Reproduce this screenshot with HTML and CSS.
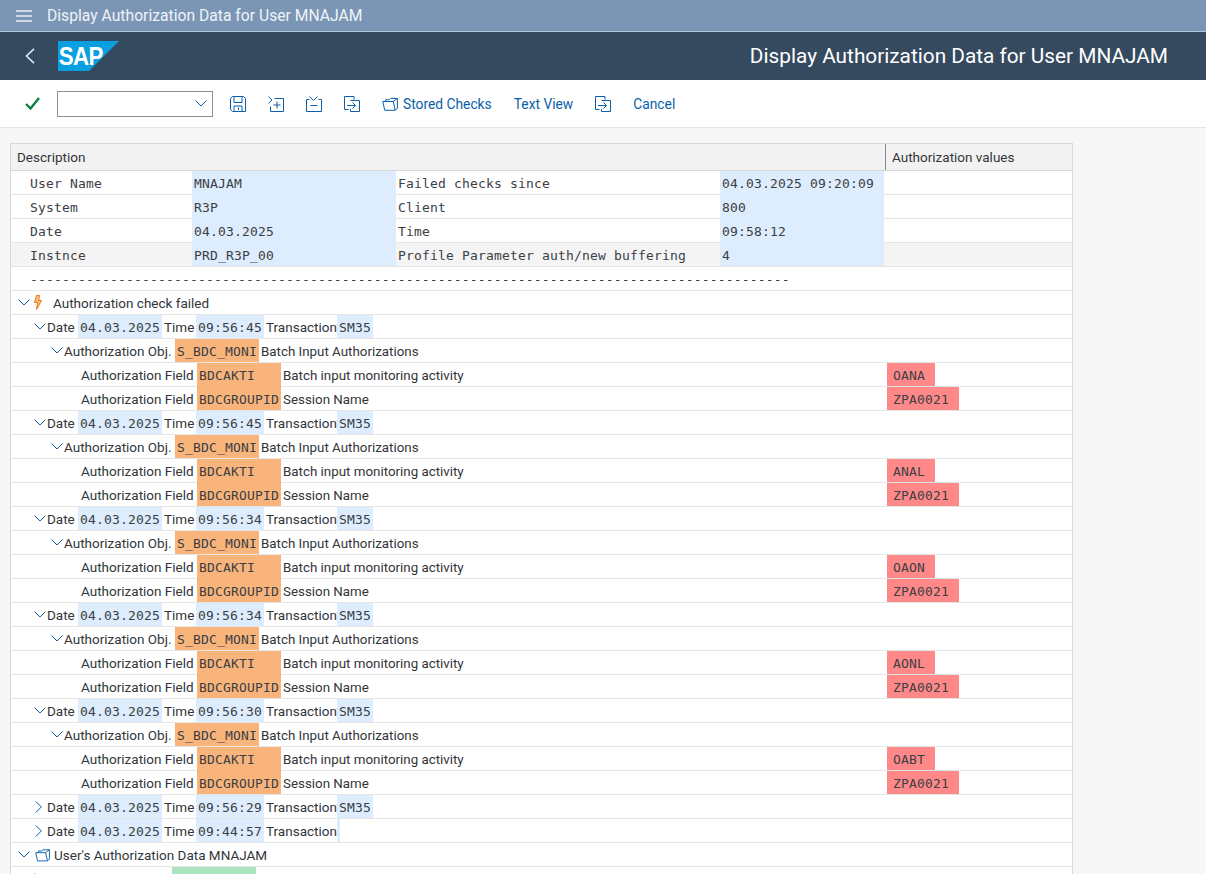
FILE: index.html
```html
<!DOCTYPE html>
<html lang="en">
<head>
  <meta charset="UTF-8">
  <title>Display Authorization Data for User MNAJAM</title>
  <link rel="stylesheet" href="styles.css">
</head>
<body>
  <svg class="defs" width="0" height="0">
    <symbol id="down" viewBox="0 0 12 7"><path d="M.5.5 6 6l5.5-5.5"/></symbol>
    <symbol id="right" viewBox="0 0 7 12"><path d="M.8.5 6.3 6 .8 11.5"/></symbol>
    <symbol id="folder" viewBox="0 0 16 14"><path d="M.7 4.5h10.6l2 8.8H2.8zM3.7 4.5V2.7h3.6L8.6 1.4h6.8v9.8l-2 2M11.3 4.5l4-3.100"/></symbol>
    <symbol id="transfer" viewBox="0 0 16 16"><path d="M4.500 13.500H.5V.5h9.500v3M6.500 4.500h9v11h-9V13M3 9.500h8M8.500 6.500l3 3-3 3"/></symbol>
  </svg>

  <header class="shell-top">
    <svg class="menu" width="16" height="12" viewBox="0 0 16 12"><path d="M0 1h16M0 6h16M0 11h16"/></svg>
    <span>Display Authorization Data for User MNAJAM</span>
  </header>

  <header class="shell-title">
    <svg class="back" width="10" height="16" viewBox="0 0 10 16"><path d="M9 .8 1.500 8 9 15.200"/></svg>
    <svg class="logo" width="61" height="30" viewBox="0 0 61 30">
      <polygon points="0,0 61,0 31,30 0,30" fill="#0a9fe0"/>
      <text x="1" y="24.500" transform="scale(.86 1)">SAP</text>
    </svg>
    <h1>Display Authorization Data for User MNAJAM</h1>
  </header>

  <nav class="toolbar">
    <svg class="check" width="15" height="13" viewBox="0 0 15 13"><path d="M1 7l4.500 4.500L14 1"/></svg>
    <div class="select">
      <svg class="ico chev" width="12" height="7"><use href="#down"/></svg>
    </div>
    <div class="tools">
      <svg class="ico" width="16" height="16" viewBox="0 0 16 16"><path d="M2.500.5h11l2 2v13H2.500l-2-2v-11zM4 .5v6h8v-6M4 15.500V10h8v5.500M8.500 11.500v2.500"/></svg>
      <svg class="ico" width="16" height="16" viewBox="0 0 16 16"><path d="M6.500 2.500h9v13H2.500v-5M.5 .5l3.500 3.500-3.500 3.500M5.500 9h7M9 5.500v7"/></svg>
      <svg class="ico" width="16" height="16" viewBox="0 0 16 16"><path d="M.5 3.500v12h15v-12h-3M3.500 3.500h-3M3.500 .5l4 4 4-4M4.500 9.500h7"/></svg>
      <svg class="ico" width="16" height="16"><use href="#transfer"/></svg>
      <span class="tool"><svg class="ico" width="16" height="14"><use href="#folder"/></svg><span>Stored Checks</span></span>
      <span class="tool"><span>Text View</span></span>
      <svg class="ico" width="16" height="16"><use href="#transfer"/></svg>
      <span class="tool"><span>Cancel</span></span>
    </div>
  </nav>

  <main class="content">
    <section class="tree">
      <div class="head"><div class="desc">Description</div><div>Authorization values</div></div>

      <div class="info join"><span class="m">User Name</span><span class="m b">MNAJAM</span><span class="m">Failed checks since</span><span class="m b">04.03.2025 09:20:09</span></div>
      <div class="info join"><span class="m">System</span><span class="m b">R3P</span><span class="m">Client</span><span class="m b">800</span></div>
      <div class="info join"><span class="m">Date</span><span class="m b">04.03.2025</span><span class="m">Time</span><span class="m b">09:58:12</span></div>
      <div class="info grey"><span class="m">Instnce</span><span class="m b">PRD_R3P_00</span><span class="m">Profile Parameter auth/new buffering</span><span class="m b">4</span></div>
      <div class="row dashes"><span class="m">-----------------------------------------------------------------------------------------------</span></div>

      <div class="row l0"><svg class="ico tw" width="12" height="7"><use href="#down"/></svg><svg class="bolt" width="10" height="15" viewBox="0 0 10 15"><path d="M6.500.5H3.500L1.500 7.500H4.800L3.500 14.500 8.500 5.500H5.500z"/></svg><span class="t0">Authorization check failed</span></div>

      <div class="row l1"><svg class="ico tw" width="12" height="7"><use href="#down"/></svg><span class="ld">Date</span><span class="m b w10">04.03.2025</span><span class="lt">Time</span><span class="m b w8">09:56:45</span><span class="lx">Transaction</span><span class="m b w4">SM35</span></div>
      <div class="row l2"><svg class="ico tw" width="12" height="7"><use href="#down"/></svg><span class="lo">Authorization Obj.</span><span class="m o w10">S_BDC_MONI</span><span class="tx">Batch Input Authorizations</span></div>
      <div class="row l3 join"><span class="lf">Authorization Field</span><span class="m o w10">BDCAKTI</span><span class="tx">Batch input monitoring activity</span><span class="m r">OANA</span></div>
      <div class="row l3"><span class="lf">Authorization Field</span><span class="m o w10">BDCGROUPID</span><span class="tx">Session Name</span><span class="m r">ZPA0021</span></div>

      <div class="row l1"><svg class="ico tw" width="12" height="7"><use href="#down"/></svg><span class="ld">Date</span><span class="m b w10">04.03.2025</span><span class="lt">Time</span><span class="m b w8">09:56:45</span><span class="lx">Transaction</span><span class="m b w4">SM35</span></div>
      <div class="row l2"><svg class="ico tw" width="12" height="7"><use href="#down"/></svg><span class="lo">Authorization Obj.</span><span class="m o w10">S_BDC_MONI</span><span class="tx">Batch Input Authorizations</span></div>
      <div class="row l3 join"><span class="lf">Authorization Field</span><span class="m o w10">BDCAKTI</span><span class="tx">Batch input monitoring activity</span><span class="m r">ANAL</span></div>
      <div class="row l3"><span class="lf">Authorization Field</span><span class="m o w10">BDCGROUPID</span><span class="tx">Session Name</span><span class="m r">ZPA0021</span></div>

      <div class="row l1"><svg class="ico tw" width="12" height="7"><use href="#down"/></svg><span class="ld">Date</span><span class="m b w10">04.03.2025</span><span class="lt">Time</span><span class="m b w8">09:56:34</span><span class="lx">Transaction</span><span class="m b w4">SM35</span></div>
      <div class="row l2"><svg class="ico tw" width="12" height="7"><use href="#down"/></svg><span class="lo">Authorization Obj.</span><span class="m o w10">S_BDC_MONI</span><span class="tx">Batch Input Authorizations</span></div>
      <div class="row l3 join"><span class="lf">Authorization Field</span><span class="m o w10">BDCAKTI</span><span class="tx">Batch input monitoring activity</span><span class="m r">OAON</span></div>
      <div class="row l3"><span class="lf">Authorization Field</span><span class="m o w10">BDCGROUPID</span><span class="tx">Session Name</span><span class="m r">ZPA0021</span></div>

      <div class="row l1"><svg class="ico tw" width="12" height="7"><use href="#down"/></svg><span class="ld">Date</span><span class="m b w10">04.03.2025</span><span class="lt">Time</span><span class="m b w8">09:56:34</span><span class="lx">Transaction</span><span class="m b w4">SM35</span></div>
      <div class="row l2"><svg class="ico tw" width="12" height="7"><use href="#down"/></svg><span class="lo">Authorization Obj.</span><span class="m o w10">S_BDC_MONI</span><span class="tx">Batch Input Authorizations</span></div>
      <div class="row l3 join"><span class="lf">Authorization Field</span><span class="m o w10">BDCAKTI</span><span class="tx">Batch input monitoring activity</span><span class="m r">AONL</span></div>
      <div class="row l3"><span class="lf">Authorization Field</span><span class="m o w10">BDCGROUPID</span><span class="tx">Session Name</span><span class="m r">ZPA0021</span></div>

      <div class="row l1"><svg class="ico tw" width="12" height="7"><use href="#down"/></svg><span class="ld">Date</span><span class="m b w10">04.03.2025</span><span class="lt">Time</span><span class="m b w8">09:56:30</span><span class="lx">Transaction</span><span class="m b w4">SM35</span></div>
      <div class="row l2"><svg class="ico tw" width="12" height="7"><use href="#down"/></svg><span class="lo">Authorization Obj.</span><span class="m o w10">S_BDC_MONI</span><span class="tx">Batch Input Authorizations</span></div>
      <div class="row l3 join"><span class="lf">Authorization Field</span><span class="m o w10">BDCAKTI</span><span class="tx">Batch input monitoring activity</span><span class="m r">OABT</span></div>
      <div class="row l3"><span class="lf">Authorization Field</span><span class="m o w10">BDCGROUPID</span><span class="tx">Session Name</span><span class="m r">ZPA0021</span></div>

      <div class="row l1 closed"><svg class="ico tw" width="7" height="12"><use href="#right"/></svg><span class="ld">Date</span><span class="m b w10">04.03.2025</span><span class="lt">Time</span><span class="m b w8">09:56:29</span><span class="lx">Transaction</span><span class="m b w4">SM35</span></div>
      <div class="row l1 closed"><svg class="ico tw" width="7" height="12"><use href="#right"/></svg><span class="ld">Date</span><span class="m b w10">04.03.2025</span><span class="lt">Time</span><span class="m b w8">09:44:57</span><span class="lx">Transaction</span><span class="m b w0"></span></div>

      <div class="row l0"><svg class="ico tw" width="12" height="7"><use href="#down"/></svg><svg class="ico fold" width="15" height="14"><use href="#folder"/></svg><span class="t1">User's Authorization Data MNAJAM</span></div>
      <div class="row l4"><svg class="ico tw" width="7" height="12"><use href="#right"/></svg><span class="g"></span></div>
    </section>
  </main>
</body>
</html>
```

FILE: styles.css
```css
*,
*::before,
*::after{
  box-sizing: border-box;
}
html, body{
  height: 100%;
}
body{
  margin: 0;
  height: 874px;
  overflow: hidden;
  background-color: #f7f7f7;
  color: #32363a;
  font-family: Roboto, "Liberation Sans", sans-serif;
  font-size: 13.5px;
}
.defs{
  position: absolute;
}
svg{
  display: block;
  flex: none;
  fill: none;
}
.ico, .ico path, symbol path{
  stroke: #0a5fa8;
}
.shell-top{
  height: 32px;
  display: flex;
  align-items: center;
  padding-left: 16px;
  gap: 15px;
  background-color: #7b96b5;
  border-bottom: 1px solid #b5c6da;
  color: #eef3f8;
  font-size: 15.700px;
}
.menu path{
  stroke: #e6edf5;
  stroke-width: 1.5;
}
.shell-title{
  height: 48px;
  display: flex;
  align-items: center;
  padding: 0 38px 0 25px;
  background-color: #354a5f;
}
.back{
  margin-right: 23px;
}
.back path{
  stroke: #dfe9f4;
  stroke-width: 1.6;
}
.logo text{
  fill: #fff;
  font-family: "Liberation Sans", sans-serif;
  font-weight: 700;
  font-size: 26px;
  letter-spacing: -.800px;
}
.shell-title h1{
  margin: 0 0 0 auto;
  font-size: 20.800px;
  font-weight: 400;
  color: #fff;
}
.toolbar{
  height: 48px;
  display: flex;
  align-items: center;
  gap: 17px;
  padding-left: 25px;
  background-color: #fff;
  border-bottom: 1px solid #e5e5e5;
}
.check path{
  stroke: #107e3e;
  stroke-width: 2.400;
}
.select{
  width: 156px;
  height: 26px;
  display: flex;
  align-items: center;
  justify-content: flex-end;
  padding-right: 5px;
  border: 1px solid #89919a;
  background-color: #fff;
}
.tools{
  display: flex;
  align-items: center;
  gap: 22px;
}
.tool{
  display: flex;
  align-items: center;
  gap: 5px;
  font-size: 13.800px;
  color: #0a5fa8;
}
.tool span{
  padding-top: 1px;
}
.content{
  padding: 15px 0 0 10px;
}
.tree{
  width: 1063px;
  background-color: #fff;
  border: solid #d9d9d9;
  border-width: 1px 1px 0;
}
.head{
  height: 27px;
  display: grid;
  grid-template-columns: 875px 1fr;
  line-height: 27px;
  background-color: #f2f2f2;
  border-bottom: 1px solid #d9d9d9;
}
.head div{
  padding-left: 6px;
  height: 26px;
}
.desc{
  border-right: 1px solid #8a8a8a;
}
.m{
  display: block;
  font-family: "DejaVu Sans Mono", monospace;
  font-size: 13px;
  letter-spacing: .170px;
  white-space: pre;
  color: #3b4045;
}
.b{
  background-color: #deedfd;
}
.o{
  background-color: #f9b47b;
}
.r{
  background-color: #ff8888;
  padding: 0 10px 0 6px;
  position: absolute;
  left: 876px;
}
.info{
  height: 24px;
  display: grid;
  grid-template-columns: 181px 204px 324px 164px 1fr;
  grid-template-rows: 23px;
  line-height: 25px;
  border-bottom: 1px solid #e5e5e5;
}
.info .m{
  padding-left: 2px;
}
.info .m:first-child{
  padding-left: 19px;
}
.info .b{
  height: 23px;
}
.join .b{
  height: 24px;
}
.grey{
  background-color: #f4f4f4;
}
.row{
  position: relative;
  height: 24px;
  display: flex;
  align-items: center;
  line-height: 25px;
  border-bottom: 1px solid #e5e5e5;
  white-space: nowrap;
}
.row > span{
  height: 23px;
}
.row.join .o{
  height: 24px;
  align-self: flex-start;
}
.dashes{
  padding-left: 19px;
}
.tw{
  margin-right: 1px;
}
.l0{
  padding-left: 7px;
}
.l1{
  padding-left: 23px;
}
.l2{
  padding-left: 40px;
}
.l3{
  padding-left: 70px;
}
.l4{
  padding-left: 23px;
}
.closed{
  padding-left: 24px;
}
.closed .tw{
  margin-right: 5px;
}
.bolt{
  margin-left: 2px;
}
.bolt path{
  fill: #fbc48c;
  stroke: #e9730c;
}
.t0{
  margin-left: 10px;
}
.fold{
  margin-left: 4px;
}
.t1{
  margin-left: 4px;
}
.ld{
  width: 31px;
}
.lt{
  width: 34px;
  padding-left: 2px;
}
.lx{
  width: 73px;
  padding-left: 2px;
}
.lo{
  width: 111px;
}
.lf{
  width: 116px;
}
.w10, .w8, .w4{
  padding: 0 2px;
}
.w10{
  width: 84px;
}
.w8{
  width: 68px;
}
.w4{
  width: 36px;
}
.w0{
  width: 3px;
}
.tx{
  padding-left: 2px;
  font-size: 13.350px;
}
.g{
  width: 84px;
  margin-left: 130px;
  background-color: #abe2bf;
}
```
